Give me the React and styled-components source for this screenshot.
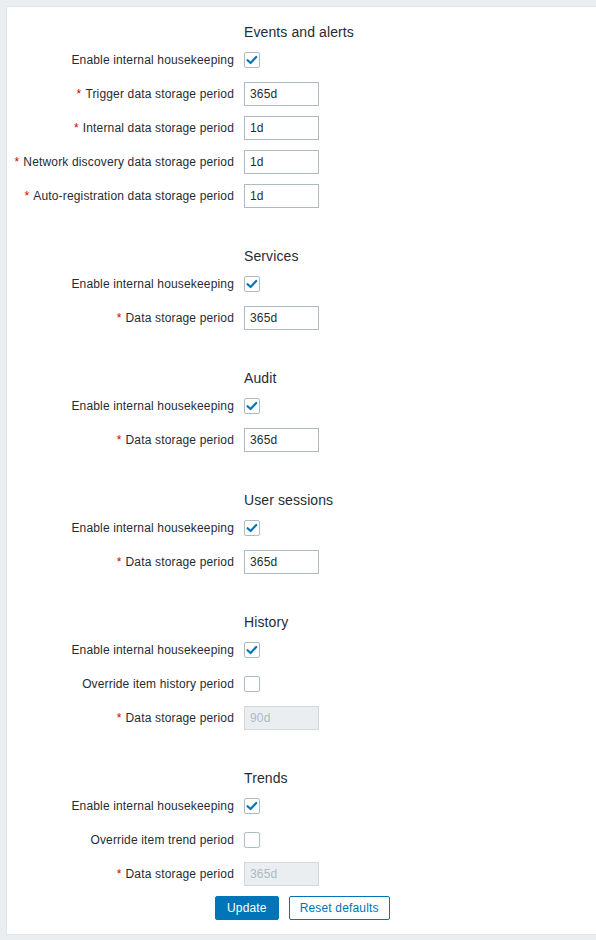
import React from "react";
import styled, { createGlobalStyle } from "styled-components";

const GlobalStyle = createGlobalStyle`
    html, body {
        margin: 0;
        padding: 0;
        background: #ebeef0;
    }
    body {
        font-family: "Liberation Sans", Arial, sans-serif;
        font-size: 12px;
        color: #1f2c33;
    }
`;

// housekeeping sections
const sections = [
    {
        title: "Events and alerts",
        rows: [
            { label: "Enable internal housekeeping", type: "checkbox", checked: true },
            { label: "Trigger data storage period", type: "input", value: "365d", required: true },
            { label: "Internal data storage period", type: "input", value: "1d", required: true },
            { label: "Network discovery data storage period", type: "input", value: "1d", required: true },
            { label: "Auto-registration data storage period", type: "input", value: "1d", required: true },
        ],
    },
    {
        title: "Services",
        rows: [
            { label: "Enable internal housekeeping", type: "checkbox", checked: true },
            { label: "Data storage period", type: "input", value: "365d", required: true },
        ],
    },
    {
        title: "Audit",
        rows: [
            { label: "Enable internal housekeeping", type: "checkbox", checked: true },
            { label: "Data storage period", type: "input", value: "365d", required: true },
        ],
    },
    {
        title: "User sessions",
        rows: [
            { label: "Enable internal housekeeping", type: "checkbox", checked: true },
            { label: "Data storage period", type: "input", value: "365d", required: true },
        ],
    },
    {
        title: "History",
        rows: [
            { label: "Enable internal housekeeping", type: "checkbox", checked: true },
            { label: "Override item history period", type: "checkbox", checked: false },
            { label: "Data storage period", type: "input", value: "90d", required: true, disabled: true },
        ],
    },
    {
        title: "Trends",
        rows: [
            { label: "Enable internal housekeeping", type: "checkbox", checked: true },
            { label: "Override item trend period", type: "checkbox", checked: false },
            { label: "Data storage period", type: "input", value: "365d", required: true, disabled: true },
        ],
    },
];

const CheckBox = ({ checked }) => (
    <CheckBoxBlock>
        {checked && (
            <svg width="14" height="14" viewBox="0 0 14 14">
                <polyline
                    points="2.6,7.2 5.6,10 11.2,4"
                    fill="none"
                    stroke="#0275b8"
                    strokeWidth="2.2"
                    strokeLinecap="round"
                    strokeLinejoin="round"
                />
            </svg>
        )}
    </CheckBoxBlock>
);

const App = () => {
    return (
        <Page>
            <GlobalStyle />
            <Panel>
                {sections.map((section, si) => (
                    <Section key={section.title} $first={si === 0}>
                        <Heading>{section.title}</Heading>
                        {section.rows.map((row, ri) => (
                            <Row key={ri}>
                                <Label>
                                    {row.required && <Asterisk>*</Asterisk>}
                                    {row.label}
                                </Label>
                                <Field>
                                    {row.type === "checkbox" ? (
                                        <CheckBox checked={row.checked} />
                                    ) : (
                                        <TextInput
                                            disabled={row.disabled}
                                            $disabled={row.disabled}
                                            defaultValue={row.value}
                                        />
                                    )}
                                </Field>
                            </Row>
                        ))}
                    </Section>
                ))}
                <Buttons>
                    <Button $primary>Update</Button>
                    <Button>Reset defaults</Button>
                </Buttons>
            </Panel>
        </Page>
    );
};

const Page = styled.div`
    min-height: 940px;
    box-sizing: border-box;
    padding: 6px 0 6px 6px;
    overflow: hidden;
`;

const Panel = styled.div`
    background: #ffffff;
    border: 1px solid #dfe4e7;
    border-right: none;
    padding: 16px 0 14px;
`;

const Section = styled.div`
    padding-top: ${(p) => (p.$first ? "0" : "29px")};
`;

const Heading = styled.h4`
    margin: 0 0 7px 237px;
    font-size: 14px;
    line-height: 18px;
    font-weight: normal;
    letter-spacing: 0.1px;
    color: #1f2c33;
`;

const Row = styled.div`
    display: grid;
    grid-template-columns: 227px 1fr;
    column-gap: 10px;
    align-items: center;
    min-height: 24px;
    margin-bottom: 10px;
`;

const Label = styled.label`
    text-align: right;
    line-height: 24px;
    white-space: nowrap;
    letter-spacing: 0.16px;
    color: #1f2c33;
`;

const Asterisk = styled.span`
    color: #d40000;
    margin-right: 4px;
`;

const Field = styled.div`
    display: flex;
    align-items: center;
    min-height: 24px;
`;

const CheckBoxBlock = styled.span`
    display: flex;
    align-items: center;
    justify-content: center;
    box-sizing: border-box;
    width: 16px;
    height: 16px;
    border: 1px solid #acbbc2;
    border-radius: 2px;
    background: #ffffff;
`;

const TextInput = styled.input`
    box-sizing: border-box;
    width: 75px;
    height: 24px;
    margin: 0;
    padding: 0 5px;
    border: 1px solid ${(p) => (p.$disabled ? "#d2dadd" : "#acbbc2")};
    border-radius: 0;
    background: ${(p) => (p.$disabled ? "#ebeef0" : "#ffffff")};
    color: ${(p) => (p.$disabled ? "#acbbc2" : "#1f2c33")};
    font-family: "Liberation Sans", Arial, sans-serif;
    font-size: 12px;
    letter-spacing: 0.16px;
    outline: none;
`;

const Buttons = styled.div`
    display: flex;
    gap: 10px;
    padding-left: 208px;
`;

const Button = styled.button`
    box-sizing: border-box;
    height: 24px;
    padding: 0 ${(p) => (p.$primary ? "11px" : "10px")};
    border: 1px solid #0275b8;
    border-radius: 2px;
    background: ${(p) => (p.$primary ? "#0275b8" : "#ffffff")};
    color: ${(p) => (p.$primary ? "#ffffff" : "#0275b8")};
    font-family: "Liberation Sans", Arial, sans-serif;
    font-size: 12px;
    letter-spacing: 0.16px;
    line-height: 22px;
    cursor: pointer;
`;

export default App;
